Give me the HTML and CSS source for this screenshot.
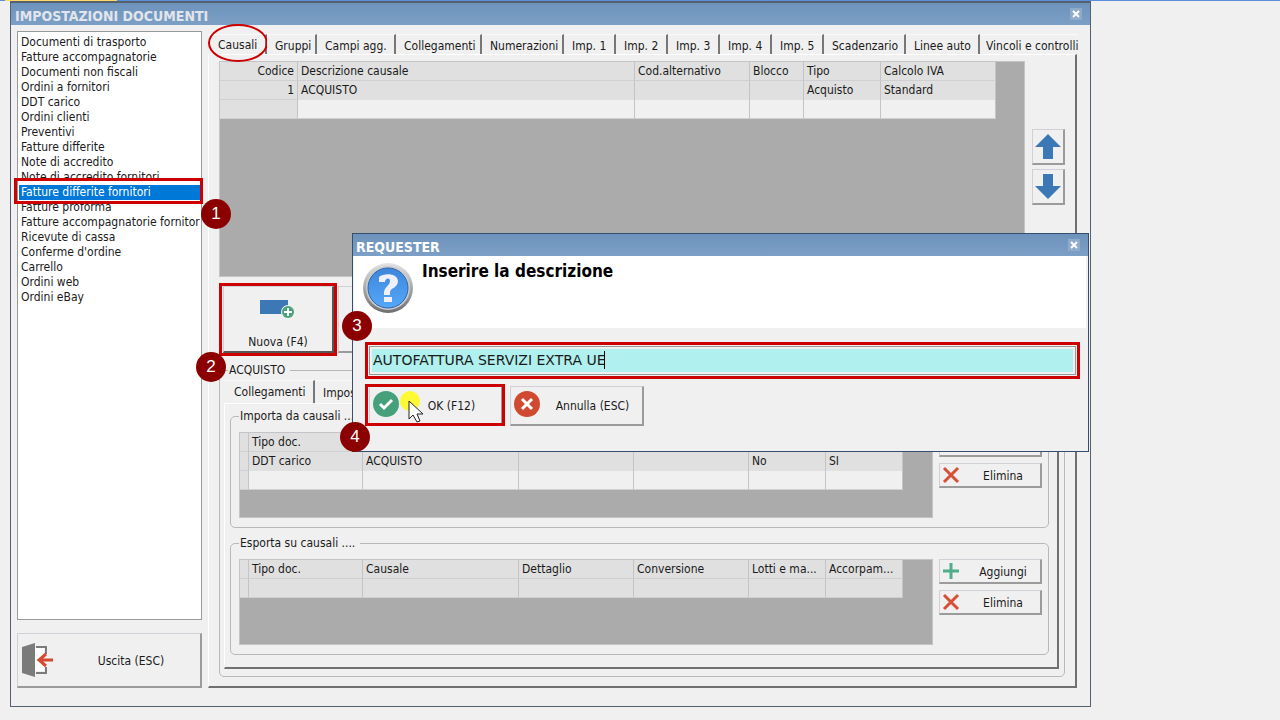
FILE: index.html
```html
<!DOCTYPE html>
<html lang="it">
<head>
  <meta charset="UTF-8" />
  <meta name="viewport" content="width=device-width, initial-scale=1.0" />
  <title>Impostazioni documenti</title>
  <link rel="stylesheet" href="styles.css">
</head>
<body>
  <div class="strip"><span></span></div>

  <div class="window">
    <header class="titlebar">
      <h1>IMPOSTAZIONI DOCUMENTI</h1>
      <button class="close" aria-label="Chiudi"><svg viewBox="0 0 8 8"><path d="M1 1l6 6M7 1l-6 6"/></svg></button>
    </header>

    <div class="window-body">
      <nav class="sidebar">
        <ul class="doc-list">
          <li>Documenti di trasporto</li>
          <li>Fatture accompagnatorie</li>
          <li>Documenti non fiscali</li>
          <li>Ordini a fornitori</li>
          <li>DDT carico</li>
          <li>Ordini clienti</li>
          <li>Preventivi</li>
          <li>Fatture differite</li>
          <li>Note di accredito</li>
          <li>Note di accredito fornitori</li>
          <li class="selected">Fatture differite fornitori<span class="mark"></span></li>
          <li>Fatture proforma</li>
          <li class="long">Fatture accompagnatorie fornitori</li>
          <li>Ricevute di cassa</li>
          <li>Conferme d'ordine</li>
          <li>Carrello</li>
          <li>Ordini web</li>
          <li>Ordini eBay</li>
        </ul>
        <span class="badge badge-1">1</span>
        <button class="btn exit">
          <svg class="exit-icon" viewBox="0 0 32 36">
            <path d="M14 5h10v7M24 25v6H14" fill="none" stroke="#7b7b7b" stroke-width="2"/>
            <path d="M13 6h9v23h-9z" fill="#fff"/>
            <path d="M0 5l13-4v34L0 31z" fill="#7b7b7b"/>
            <path d="M31 18H17M24 12l-7 6 7 6" fill="none" stroke="#d4492f" stroke-width="3"/>
          </svg>
          <span>Uscita (ESC)</span>
        </button>
      </nav>

      <main>
        <div class="tabs main-tabs">
          <button class="tab active">Causali<span class="ring"></span></button>
          <button class="tab">Gruppi</button>
          <button class="tab">Campi agg.</button>
          <button class="tab">Collegamenti</button>
          <button class="tab">Numerazioni</button>
          <button class="tab">Imp. 1</button>
          <button class="tab">Imp. 2</button>
          <button class="tab">Imp. 3</button>
          <button class="tab">Imp. 4</button>
          <button class="tab">Imp. 5</button>
          <button class="tab">Scadenzario</button>
          <button class="tab">Linee auto</button>
          <button class="tab">Vincoli e controlli</button>
        </div>

        <div class="panel main-panel">
          <div class="row">
            <div class="grid grid-main">
              <table class="causali">
                <colgroup><col class="w78"><col class="w337"><col class="w115"><col class="w54"><col class="w77"><col class="w115"></colgroup>
                <thead>
                  <tr><th class="num">Codice</th><th>Descrizione causale</th><th>Cod.alternativo</th><th>Blocco</th><th>Tipo</th><th>Calcolo IVA</th></tr>
                </thead>
                <tbody>
                  <tr class="current"><td class="num">1</td><td>ACQUISTO</td><td></td><td></td><td>Acquisto</td><td>Standard</td></tr>
                  <tr><td></td><td></td><td></td><td></td><td></td><td></td></tr>
                </tbody>
              </table>
            </div>
            <div class="arrows">
              <button class="btn arrow" aria-label="Su"><svg viewBox="0 0 26 26"><path d="M13 0l13 13h-8v12H8V13H0z"/></svg></button>
              <button class="btn arrow" aria-label="Giù"><svg viewBox="0 0 26 26"><path d="M13 25L0 12h8V0h10v12h8z"/></svg></button>
            </div>
          </div>

          <div class="toolbar">
            <div class="marked">
              <button class="btn new">
                <svg class="new-icon" viewBox="0 0 36 22">
                  <path d="M0 2h28v14H0z" fill="#3b78b5"/>
                  <circle cx="28" cy="14" r="7" fill="#f0f0f0"/>
                  <circle cx="28" cy="14" r="6" fill="#46a37a"/>
                  <path d="M28 10v8M24 14h8" stroke="#fff" stroke-width="2"/>
                </svg>
                <span>Nuova (F4)</span>
              </button>
              <span class="mark"></span>
              <span class="badge badge-2">2</span>
            </div>
            <button class="btn blank" aria-label="Modifica"></button>
          </div>

          <fieldset class="group">
            <legend>ACQUISTO</legend>
            <div class="tabs sub-tabs">
              <button class="tab active">Collegamenti</button>
              <button class="tab">Impostazioni</button>
            </div>
            <div class="panel sub-panel">
              <fieldset class="box">
                <legend>Importa da causali ....</legend>
                <div class="row">
                  <div class="grid">
                    <table class="links">
                      <colgroup><col class="w9"><col class="w114"><col class="w156"><col class="w115"><col class="w115"><col class="w77"><col class="w77"></colgroup>
                      <thead>
                        <tr><th></th><th>Tipo doc.</th><th>Causale</th><th>Dettaglio</th><th>Conversione</th><th>Lotti e ma...</th><th>Accorpam...</th></tr>
                      </thead>
                      <tbody>
                        <tr class="current"><td></td><td>DDT carico</td><td>ACQUISTO</td><td></td><td></td><td>No</td><td>SI</td></tr>
                        <tr><td></td><td></td><td></td><td></td><td></td><td></td><td></td></tr>
                      </tbody>
                    </table>
                  </div>
                  <div class="actions">
                    <button class="btn small"><svg class="plus" viewBox="0 0 18 18"><path d="M9 1v16M1 9h16"/></svg><span>Aggiungi</span></button>
                    <button class="btn small"><svg class="cross" viewBox="0 0 18 18"><path d="M2 2l14 14M16 2L2 16"/></svg><span>Elimina</span></button>
                  </div>
                </div>
              </fieldset>

              <fieldset class="box">
                <legend>Esporta su causali ....</legend>
                <div class="row">
                  <div class="grid">
                    <table class="links">
                      <colgroup><col class="w9"><col class="w114"><col class="w156"><col class="w115"><col class="w115"><col class="w77"><col class="w77"></colgroup>
                      <thead>
                        <tr><th></th><th>Tipo doc.</th><th>Causale</th><th>Dettaglio</th><th>Conversione</th><th>Lotti e ma...</th><th>Accorpam...</th></tr>
                      </thead>
                      <tbody>
                        <tr class="current"><td></td><td></td><td></td><td></td><td></td><td></td><td></td></tr>
                      </tbody>
                    </table>
                  </div>
                  <div class="actions">
                    <button class="btn small"><svg class="plus" viewBox="0 0 18 18"><path d="M9 1v16M1 9h16"/></svg><span>Aggiungi</span></button>
                    <button class="btn small"><svg class="cross" viewBox="0 0 18 18"><path d="M2 2l14 14M16 2L2 16"/></svg><span>Elimina</span></button>
                  </div>
                </div>
              </fieldset>
            </div>
          </fieldset>
        </div>
      </main>
    </div>

    <div class="dialog" role="dialog" aria-labelledby="dialogTitle">
      <header class="titlebar">
        <h2 id="dialogTitle">REQUESTER</h2>
        <button class="close" aria-label="Chiudi"><svg viewBox="0 0 8 8"><path d="M1 1l6 6M7 1l-6 6"/></svg></button>
      </header>
      <div class="dialog-head">
        <svg class="question" viewBox="0 0 52 52">
          <defs>
            <linearGradient id="rim" x1="0" y1="0" x2="0" y2="1">
              <stop offset="0" stop-color="#e4e4e4"/><stop offset="1" stop-color="#6e6e6e"/>
            </linearGradient>
            <linearGradient id="ball" x1="0" y1="0" x2="0" y2="1">
              <stop offset="0" stop-color="#3d86dc"/><stop offset="1" stop-color="#55a8f8"/>
            </linearGradient>
          </defs>
          <circle cx="26" cy="26" r="25" fill="url(#rim)"/>
          <circle cx="26" cy="26" r="22" fill="#c9cbce"/>
          <circle cx="26" cy="26" r="20" fill="url(#ball)" stroke="#2d67b0"/>
          <path d="M17 15c5-4 18-4 19 4 0 7-8 7-8 11v3h-6c-1-8 6-9 6-14 0-4-5-3-5 1h-6z" fill="#f0f0fc"/>
          <path d="M22 35h8v5h-8z" fill="#f0f0fc"/>
        </svg>
        <label for="descrizione">Inserire la descrizione</label>
      </div>
      <div class="dialog-body">
        <div class="marked field">
          <input id="descrizione" type="text" value="AUTOFATTURA SERVIZI EXTRA UE">
          <span class="caret"></span>
          <span class="mark"></span>
          <span class="badge badge-3">3</span>
        </div>
        <div class="dialog-buttons">
          <div class="marked">
            <button class="btn wide">
              <svg class="round" viewBox="0 0 26 26"><circle cx="13" cy="13" r="13" fill="#46a07a"/><path d="M7 13l4 4 8-8" fill="none" stroke="#fff" stroke-width="3"/></svg>
              <span>OK (F12)</span>
            </button>
            <span class="mark"></span>
            <span class="badge badge-4">4</span>
            <svg class="pointer" viewBox="0 0 26 32">
              <circle cx="11" cy="10" r="10" fill="#fdf935"/>
              <path d="M10 10v18l4-4 4 7 3-1-3-7h6z" fill="#fff" stroke="#222"/>
            </svg>
          </div>
          <button class="btn wide">
            <svg class="round" viewBox="0 0 26 26"><circle cx="13" cy="13" r="13" fill="#cf4a31"/><path d="M8 8l10 10M18 8L8 18" stroke="#fff" stroke-width="3"/></svg>
            <span>Annulla (ESC)</span>
          </button>
        </div>
      </div>
    </div>
  </div>
</body>
</html>
```
FILE: styles.css
```css
* {
  box-sizing: border-box;
}

body {
  margin: 0;
  min-height: 100vh;
  background-color: #f0f0f0;
  color: #1a1a1a;
  font-family: Tahoma, "DejaVu Sans Condensed", "Noto Sans", sans-serif;
  font-size: 12px;
  line-height: 15px;
}

button,
input {
  font: inherit;
  color: inherit;
}

/* edge of the application behind the window */
.strip {
  height: 1px;
  background-color: #5b8fdc;
}

.strip span {
  display: block;
  width: 112px;
  height: 1px;
  margin-left: 5px;
  background-color: #ffd966;
}

.window {
  position: relative;
  margin: 0 189px 14px 10px;
  border: 1px solid #55616f;
  border-top-width: 2px;
}

.titlebar {
  display: flex;
  align-items: center;
  justify-content: space-between;
  height: 22px;
  padding: 0 8px 0 4px;
  background: linear-gradient(#6d93bc, #7c9fc6);
}

.titlebar h1,
.titlebar h2 {
  margin: 0;
  padding-top: 4px;
  font-size: 14px;
  line-height: 16px;
  color: #e2e6ec;
}

.titlebar h2 {
  color: #fff;
}

.close {
  width: 12px;
  height: 12px;
  padding: 2px;
  border: 0;
  background-color: #8fabc9;
}

.close svg {
  display: block;
  width: 8px;
  height: 8px;
  stroke: #fff;
  stroke-width: 2;
}

.window-body {
  display: flex;
  gap: 6px;
  padding: 6px 13px 18px 6px;
}

/* left column */
.sidebar {
  position: relative;
  display: flex;
  flex-direction: column;
  gap: 13px;
  flex: 0 0 185px;
  min-width: 0;
}

.doc-list {
  flex: 1;
  margin: 0;
  padding: 3px 1px 2px;
  list-style: none;
  background-color: #fff;
  border: 1px solid #9a9a9a;
}

.doc-list li {
  padding-left: 2px;
  white-space: nowrap;
}

.doc-list .long {
  overflow: hidden;
}

.doc-list .selected {
  position: relative;
  background-color: #0078d7;
  color: #fff;
}

.btn {
  display: flex;
  align-items: center;
  padding: 0;
  border: 1px solid #d0d0d6;
  border-right: 2px solid #9b9b9b;
  border-bottom: 2px solid #9b9b9b;
  background-color: #f0f0f0;
}

.btn span {
  flex: 1;
  text-align: center;
}

.exit {
  height: 55px;
  padding: 0 0 0 4px;
}

.exit span {
  padding: 2px 0 0 8px;
}

.exit-icon {
  width: 32px;
  height: 36px;
}

/* tabs and panels */
main {
  flex: 1;
  min-width: 0;
  padding-top: 3px;
}

.tabs {
  display: grid;
}

.main-tabs {
  grid-template-columns: 59px 50px 79px 86px 82px repeat(5, 52px) 82px 74px 1fr;
  height: 20px;
}

.sub-tabs {
  grid-template-columns: 91px 91px;
  height: 25px;
  padding-top: 2px;
}

.tab {
  position: relative;
  padding: 3px 0 0 8px;
  border: 0;
  border-top: 1px solid #fafafa;
  border-right: 2px solid #777;
  background-color: #f0f0f0;
  text-align: left;
  white-space: nowrap;
}

.tab.active {
  padding-top: 1px;
  padding-left: 10px;
}

.main-tabs .tab:last-child {
  padding-left: 6px;
  border-right: 0;
}

.panel {
  border-top: 1px solid #fff;
  border-left: 1px solid #fff;
  border-right: 2px solid #707070;
  border-bottom: 2px solid #707070;
}

.main-panel {
  padding: 6px 10px 9px;
}

.sub-panel {
  display: flex;
  flex-direction: column;
  gap: 8px;
  padding: 5px 8px 12px 5px;
}

.row {
  display: flex;
  gap: 7px;
}

/* data grids */
.grid {
  flex: 1;
  min-width: 0;
  min-height: 86px;
  border: 1px solid #c3c3c8;
  background-color: #ababab;
  overflow: hidden;
}

.grid-main {
  min-height: 216px;
}

table {
  border-collapse: separate;
  border-spacing: 0;
  table-layout: fixed;
}

.causali {
  width: 776px;
}

.links {
  width: 663px;
}

.w9 { width: 9px; }
.w54 { width: 54px; }
.w77 { width: 77px; }
.w78 { width: 78px; }
.w114 { width: 114px; }
.w115 { width: 115px; }
.w156 { width: 156px; }
.w337 { width: 337px; }

th,
td {
  height: 19px;
  padding: 0 0 0 3px;
  border-right: 1px solid #c3c3c8;
  background-color: #f0f0f0;
  font-weight: normal;
  text-align: left;
  white-space: nowrap;
}

th,
tr.current td,
td:first-child {
  background-color: #e0e0e0;
}

th,
td:first-child,
tr:last-child td {
  border-bottom: 1px solid #cfcfd4;
}

.num {
  padding: 0 3px 0 0;
  text-align: right;
}

.arrows {
  display: flex;
  flex-direction: column;
  gap: 4px;
  padding-top: 68px;
}

.arrow {
  width: 33px;
  height: 36px;
  justify-content: center;
}

.arrow svg {
  width: 26px;
  height: 26px;
  fill: #3b78b5;
}

.toolbar {
  display: flex;
  gap: 4px;
  margin: 9px 0 10px;
  padding-left: 4px;
}

.new,
.blank {
  width: 111px;
  height: 67px;
}

.new {
  flex-direction: column;
  padding-top: 11px;
  border-right-color: #555;
  border-bottom-color: #555;
}

.new span {
  display: flex;
  align-items: flex-end;
  padding-bottom: 1px;
}

.new-icon {
  width: 36px;
  height: 22px;
}

fieldset {
  min-width: 0;
  margin: 0;
  border: 1px solid #b8b8b8;
  border-radius: 5px;
}

legend {
  padding: 0 5px 0 1px;
}

.group {
  padding: 0 5px 7px 4px;
}

.group > legend {
  margin-left: 4px;
}

.box {
  padding: 8px 6px 9px 8px;
}

.box .row {
  gap: 6px;
}

.actions {
  display: flex;
  flex-direction: column;
  gap: 6px;
}

.small {
  width: 103px;
  height: 25px;
  padding-left: 2px;
}

.small span {
  padding: 3px 0 0 6px;
}

.small svg {
  width: 18px;
  height: 18px;
  fill: none;
  stroke-width: 3;
}

.plus {
  stroke: #4fae8a;
}

.cross {
  stroke: #d94f36;
}

/* requester */
.dialog {
  position: absolute;
  top: 230px;
  left: 341px;
  right: 1px;
  border: 1px solid #34506e;
  background-color: #f0f0f0;
}

.dialog .titlebar {
  padding-left: 3px;
}

.dialog-head {
  display: flex;
  gap: 8px;
  height: 72px;
  margin: 0 2px 0 1px;
  padding: 6px 8px;
  background-color: #fff;
}

.question {
  width: 52px;
  height: 52px;
}

.dialog-head label {
  font-size: 17px;
  line-height: 18px;
  font-weight: bold;
  color: #000;
}

.dialog-body {
  padding: 18px 12px 25px 16px;
}

.marked {
  position: relative;
}

.field input {
  display: block;
  width: 100%;
  height: 29px;
  padding: 0 3px 2px;
  border: 1px solid #999;
  outline: 0;
  background-color: #b0f0ee;
  box-shadow: inset 0 0 0 2px #f0f0f0;
  font-family: Tahoma, "DejaVu Sans", sans-serif;
  font-size: 14px;
}

.caret {
  position: absolute;
  top: 5px;
  left: 235px;
  width: 1px;
  height: 18px;
  background-color: #000;
}

.dialog-buttons {
  display: flex;
  gap: 7px;
  margin-top: 11px;
}

.wide {
  width: 134px;
  height: 40px;
  padding: 0 0 4px 3px;
}

.wide span {
  padding: 5px 0 0 3px;
}

.round {
  width: 26px;
  height: 26px;
}

/* tutorial annotations */
.mark {
  position: absolute;
  inset: -4px;
  border: 3px solid #c00;
  pointer-events: none;
}

.doc-list .mark {
  inset: -7px -3px -4px -5px;
  z-index: 1;
}

.dialog-buttons .mark {
  inset: -2px -2px 0 -4px;
}

.toolbar .mark {
  inset: -3px -3px -3px -4px;
}

.ring {
  position: absolute;
  top: -11px;
  left: 0;
  width: 60px;
  height: 38px;
  border: 2px solid #c00;
  border-radius: 50%;
}

.badge {
  position: absolute;
  z-index: 2;
  width: 30px;
  height: 30px;
  border-radius: 50%;
  background-color: #8b0000;
  color: #fff;
  font-family: "Liberation Sans", sans-serif;
  font-size: 17px;
  line-height: 30px;
  text-align: center;
}

.badge-1 {
  top: 168px;
  left: 184px;
}

.badge-2 {
  top: 66px;
  left: -27px;
}

.badge-3 {
  top: -35px;
  left: -27px;
}

.badge-4 {
  top: 36px;
  left: -29px;
}

.pointer {
  position: absolute;
  top: 5px;
  left: 30px;
  width: 26px;
  height: 32px;
}
```
